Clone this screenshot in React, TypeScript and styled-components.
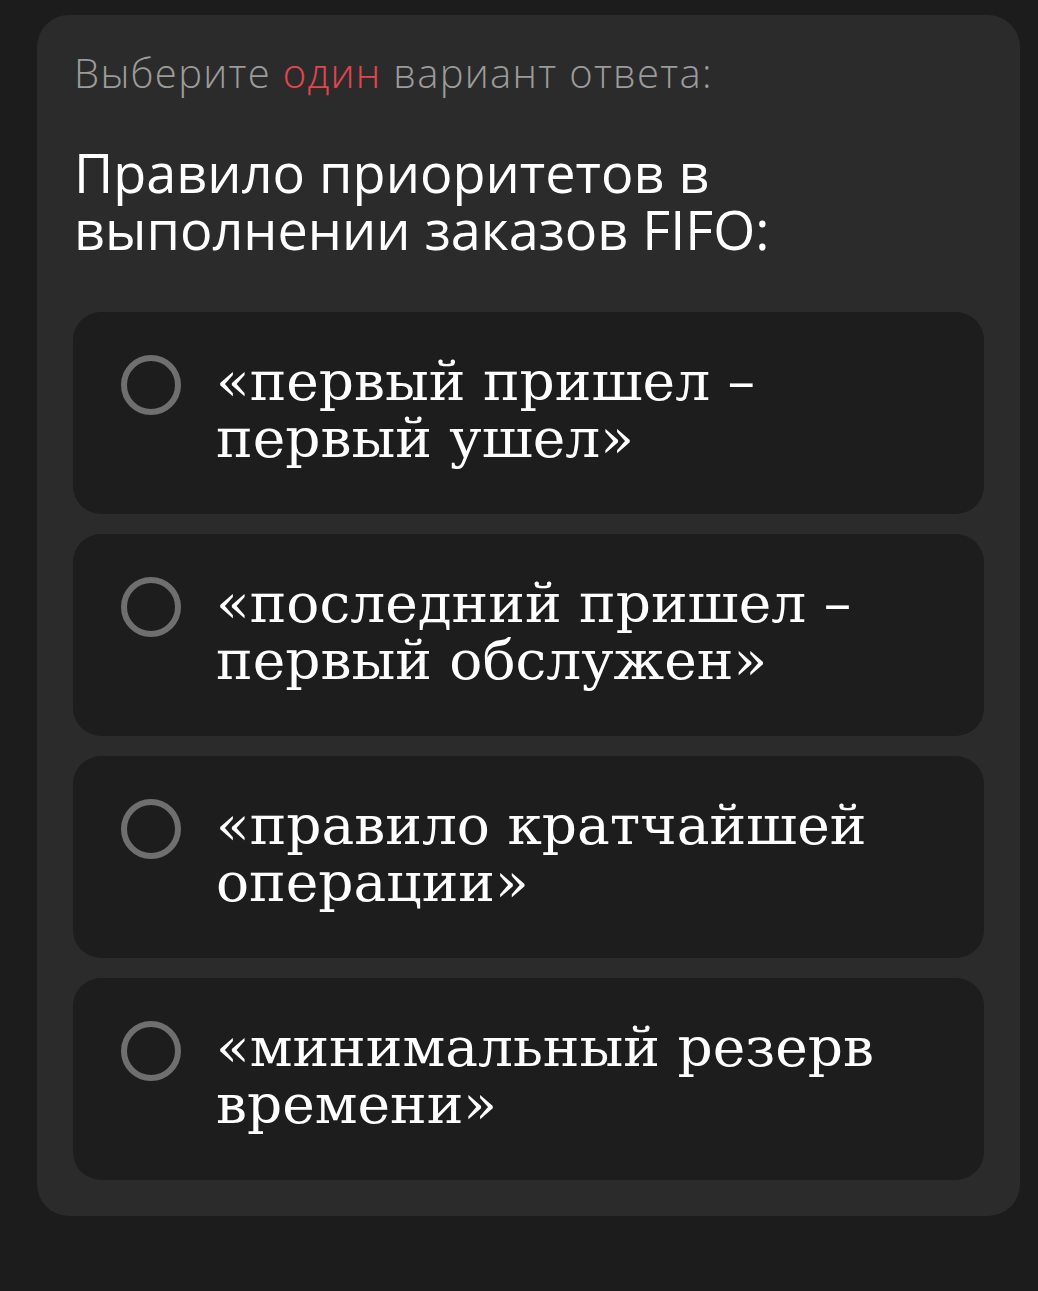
import React from "react";
import styled, { createGlobalStyle } from "styled-components";

const Global = createGlobalStyle`
  html, body {
    margin: 0;
    padding: 0;
    background: #1c1c1c;
  }
`;

const Page = styled.div`
  padding: 15px 18px 76px 37px;
`;

const Card = styled.div`
  background: #2b2b2b;
  border-radius: 32px;
  padding: 33px 36px 36px 36px;
  display: flex;
  flex-direction: column;
`;

const Hint = styled.div`
  font-family: "Open Sans", sans-serif;
  font-weight: 300;
  font-size: 40px;
  line-height: 50px;
  letter-spacing: 1.3px;
  color: #9b9b9b;
  margin-left: 1px;
`;

const Accent = styled.span`
  color: #e2464f;
`;

const Question = styled.div`
  font-family: "Open Sans", sans-serif;
  font-weight: 400;
  font-size: 54px;
  line-height: 57px;
  color: #ffffff;
  margin: 46px 0 54px 1px;
`;

const Options = styled.div`
  display: flex;
  flex-direction: column;
  gap: 20px;
`;

const Option = styled.label`
  display: flex;
  align-items: flex-start;
  gap: 35px;
  background: #1d1d1d;
  border-radius: 28px;
  min-height: 202px;
  box-sizing: border-box;
  padding: 43px 40px 40px 48px;
  cursor: pointer;
`;

const Radio = styled.span`
  flex: none;
  width: 60px;
  height: 60px;
  box-sizing: border-box;
  border: 6px solid #6f6f6f;
  border-radius: 50%;
`;

const OptionText = styled.span`
  font-family: "DejaVu Serif", serif;
  font-size: 55px;
  line-height: 57px;
  color: #ffffff;
  max-width: 700px;
  margin-top: -2px;
`;

const answers = [
  "«первый пришел – первый ушел»",
  "«последний пришел – первый обслужен»",
  "«правило кратчайшей операции»",
  "«минимальный резерв времени»",
];

export default function App() {
  return (
    <Page>
      <Global />
      <Card>
        <Hint>
          Выберите <Accent>один</Accent> вариант ответа:
        </Hint>
        <Question>
          Правило приоритетов в
          <br />
          выполнении заказов FIFO:
        </Question>
        <Options>
          {answers.map((a) => (
            <Option key={a}>
              <Radio />
              <OptionText>{a}</OptionText>
            </Option>
          ))}
        </Options>
      </Card>
    </Page>
  );
}
